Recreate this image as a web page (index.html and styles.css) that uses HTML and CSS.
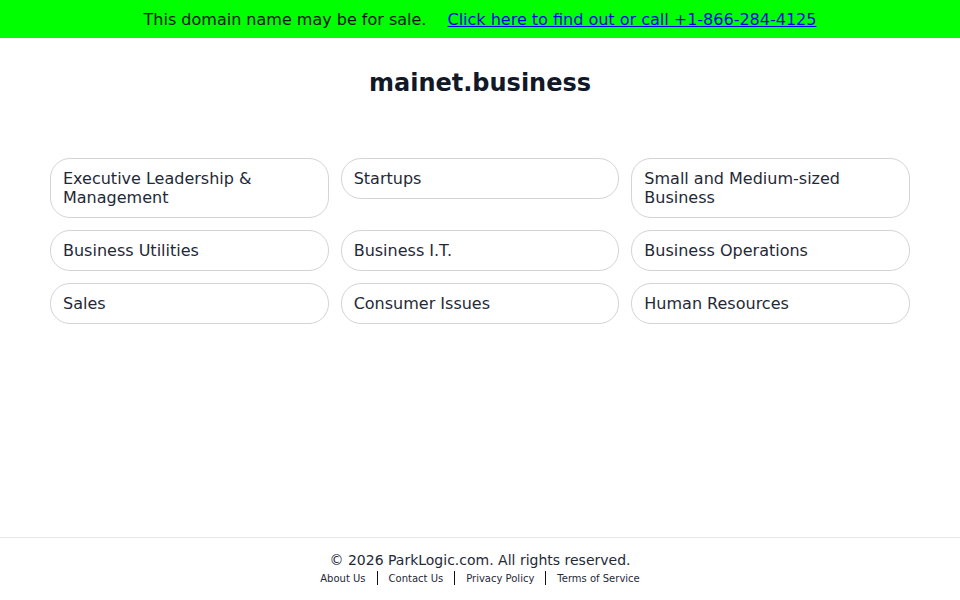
FILE: index.html
```html
<!DOCTYPE html>
<html>
<head>
<meta charset="utf-8">
<link rel="stylesheet" href="styles.css">
</head>
<body>
<div class="page">
  <div class="banner">
    <span class="banner-text">This domain name may be for sale.</span>
    <a class="banner-link" href="#">Click here to find out or call +1-866-284-4125</a>
  </div>
  <main class="main">
    <h1 class="title">mainet.business</h1>
    <div class="grid">
      <a class="card" href="#">Executive Leadership &amp; Management</a>
      <a class="card" href="#">Startups</a>
      <a class="card" href="#">Small and Medium-sized Business</a>
      <a class="card" href="#">Business Utilities</a>
      <a class="card" href="#">Business I.T.</a>
      <a class="card" href="#">Business Operations</a>
      <a class="card" href="#">Sales</a>
      <a class="card" href="#">Consumer Issues</a>
      <a class="card" href="#">Human Resources</a>
    </div>
  </main>
  <footer class="footer">
    <div class="copy">© 2026 ParkLogic.com. All rights reserved.</div>
    <div class="links">
      <a href="#">About Us</a><span class="sep"></span><a href="#">Contact Us</a><span class="sep"></span><a href="#">Privacy Policy</a><span class="sep"></span><a href="#">Terms of Service</a>
    </div>
  </footer>
</div>
</body>
</html>
```
FILE: styles.css
```css
html, body {
  margin: 0;
  padding: 0;
  background: #ffffff;
  font-family: "DejaVu Sans", sans-serif;
  color: #1f2937;
}
.page {
  min-height: 100vh;
  display: flex;
  flex-direction: column;
}
.banner {
  height: 38px;
  background: #00ff00;
  display: flex;
  align-items: center;
  justify-content: center;
  gap: 21px;
  font-size: 16px;
  color: #111111;
}
.banner-link {
  color: #0000ee;
  text-decoration: underline;
}
.main {
  display: flex;
  flex-direction: column;
  align-items: center;
  padding-top: 31px;
}
.title {
  margin: 0;
  font-size: 24px;
  line-height: 28px;
  font-weight: bold;
  color: #111827;
}
.grid {
  margin-top: 61px;
  width: 860px;
  display: grid;
  grid-template-columns: repeat(3, 1fr);
  gap: 12px;
  align-items: start;
}
.card {
  display: block;
  border: 1px solid #d4d4d8;
  border-radius: 20px;
  padding: 10px 12px;
  font-size: 16px;
  line-height: 19px;
  color: #1f2937;
  text-decoration: none;
}
.footer {
  margin-top: auto;
  border-top: 1px solid #e5e7eb;
  height: 63px;
  box-sizing: border-box;
  padding-top: 14px;
  text-align: center;
}
.copy {
  font-size: 14px;
  line-height: 17px;
  color: #1f2937;
}
.links {
  margin-top: 2px;
  display: flex;
  justify-content: center;
  align-items: center;
  font-size: 10px;
  line-height: 13px;
}
.links a {
  color: #1f2937;
  text-decoration: none;
}
.sep {
  display: inline-block;
  width: 1px;
  height: 14px;
  background: #111111;
  margin: 0 11px;
}
```
